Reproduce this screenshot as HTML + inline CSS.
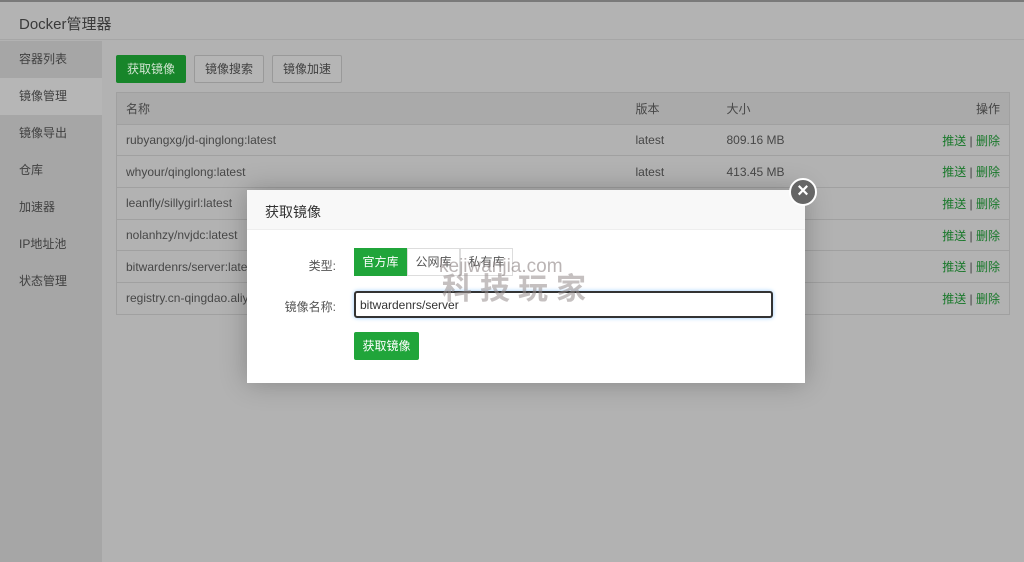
<!DOCTYPE html>
<html><head><meta charset="utf-8"><style>
*{margin:0;padding:0;box-sizing:border-box}
body{width:1024px;height:562px;overflow:hidden;background:#b2b2b2;font-family:"Liberation Sans","Noto Sans CJK SC",sans-serif;font-size:12px;color:#4a4a4a;position:relative}
.top{position:absolute;left:0;top:0;width:1024px;height:2px;background:#7a7a7a}
.hdr{position:absolute;left:0;top:2px;width:1024px;height:38px;background:#b3b3b3;border-bottom:1px solid #a6a6a6;font-size:15px;padding:11px 0 0 19px;color:#3a3a3a}
.side{position:absolute;left:0;top:41px;width:102px;height:521px;background:#a6a6a6}
.side div{height:37px;line-height:37px;padding-left:19px;font-size:12px;color:#404040}
.side .act{background:#b6b6b6}
.main{position:absolute;left:102px;top:41px;width:922px;height:521px;background:#b2b2b2}
.btn{position:absolute;top:55px;height:28px;line-height:26px;padding:0 10px;border:1px solid #999;border-radius:2px;background:#b5b5b5;font-size:12px;color:#404040}
.btn.g{background:#17852a;border-color:#17852a;color:#d0e4d0}
table{position:absolute;left:116px;top:92px;width:894px;border-collapse:collapse;border:1px solid #a0a0a0}
td{height:31.7px;border-top:1px solid #a0a0a0;padding-left:9px;color:#474747;font-size:12px}
tr.h td{background:#aaaaaa}
td.r{text-align:right;padding-right:9px;color:#18782a}
td.r span{color:#444}
.modal{position:absolute;left:247px;top:190px;width:558px;height:193px;background:#fff;box-shadow:0 0 25px rgba(0,0,0,.25)}
.mh{height:40px;background:#f8f8f8;border-bottom:1px solid #eee;font-size:14px;padding:12px 0 0 18px;color:#333}
.close{position:absolute;left:789px;top:178px;width:28px;height:28px;border-radius:50%;background:#666;border:2px solid #fff;color:#fff;text-align:center;line-height:22px;font-size:20px;font-weight:bold}
.lbl{position:absolute;font-size:12px;color:#555;text-align:right;width:80px}
.tabs{position:absolute;left:107px;top:58px;height:28px;display:flex}
.tabs div{width:53px;height:28px;line-height:27px;text-align:center;border:1px solid #ddd;font-size:12px;color:#555}
.tabs .on{background:#20a53a;color:#fff;border-color:#20a53a}
.inp{position:absolute;left:107px;top:101px;width:419px;height:27px;border:2px solid #333;border-radius:3px;padding:5px 0 0 4px;font-size:12px;color:#333;box-shadow:0 0 4px #9cf}
.gbtn{position:absolute;left:107px;top:142px;width:65px;height:28px;background:#20a53a;color:#fff;border-radius:2px;line-height:28px;text-align:center;font-size:12px}
.wm1{position:absolute;left:439px;top:256px;font-size:19px;line-height:22px;color:rgba(140,130,130,.6)}
.wm2{position:absolute;left:442px;top:274px;font-size:30px;line-height:32px;font-weight:bold;color:rgba(150,140,140,.55);letter-spacing:8px}
</style></head><body>
<div class="top"></div>
<div class="hdr">Docker管理器</div>
<div class="side">
<div>容器列表</div><div class="act">镜像管理</div><div>镜像导出</div><div>仓库</div><div>加速器</div><div>IP地址池</div><div>状态管理</div>
</div>
<div class="main"></div>
<div class="btn g" style="left:116px">获取镜像</div>
<div class="btn" style="left:194px">镜像搜索</div>
<div class="btn" style="left:272px">镜像加速</div>
<table>
<tr class="h"><td style="width:510px">名称</td><td style="width:91px">版本</td><td style="width:130px">大小</td><td class="r" style="color:#444">操作</td></tr>
<tr><td>rubyangxg/jd-qinglong:latest</td><td>latest</td><td>809.16 MB</td><td class="r">推送 <span>|</span> 删除</td></tr>
<tr><td>whyour/qinglong:latest</td><td>latest</td><td>413.45 MB</td><td class="r">推送 <span>|</span> 删除</td></tr>
<tr><td>leanfly/sillygirl:latest</td><td></td><td></td><td class="r">推送 <span>|</span> 删除</td></tr>
<tr><td>nolanhzy/nvjdc:latest</td><td></td><td></td><td class="r">推送 <span>|</span> 删除</td></tr>
<tr><td>bitwardenrs/server:latest</td><td></td><td></td><td class="r">推送 <span>|</span> 删除</td></tr>
<tr><td>registry.cn-qingdao.aliyun</td><td></td><td></td><td class="r">推送 <span>|</span> 删除</td></tr>
</table>
<div class="modal">
<div class="mh">获取镜像</div>
<div class="lbl" style="left:9px;top:67px">类型:</div>
<div class="tabs"><div class="on">官方库</div><div>公网库</div><div>私有库</div></div>
<div class="lbl" style="left:9px;top:108px">镜像名称:</div>
<div class="inp">bitwardenrs/server</div>
<div class="gbtn">获取镜像</div>
</div>
<div class="close">×</div>
<div class="wm1">kejiwanjia.com</div>
<div class="wm2">科技玩家</div>
</body></html>
